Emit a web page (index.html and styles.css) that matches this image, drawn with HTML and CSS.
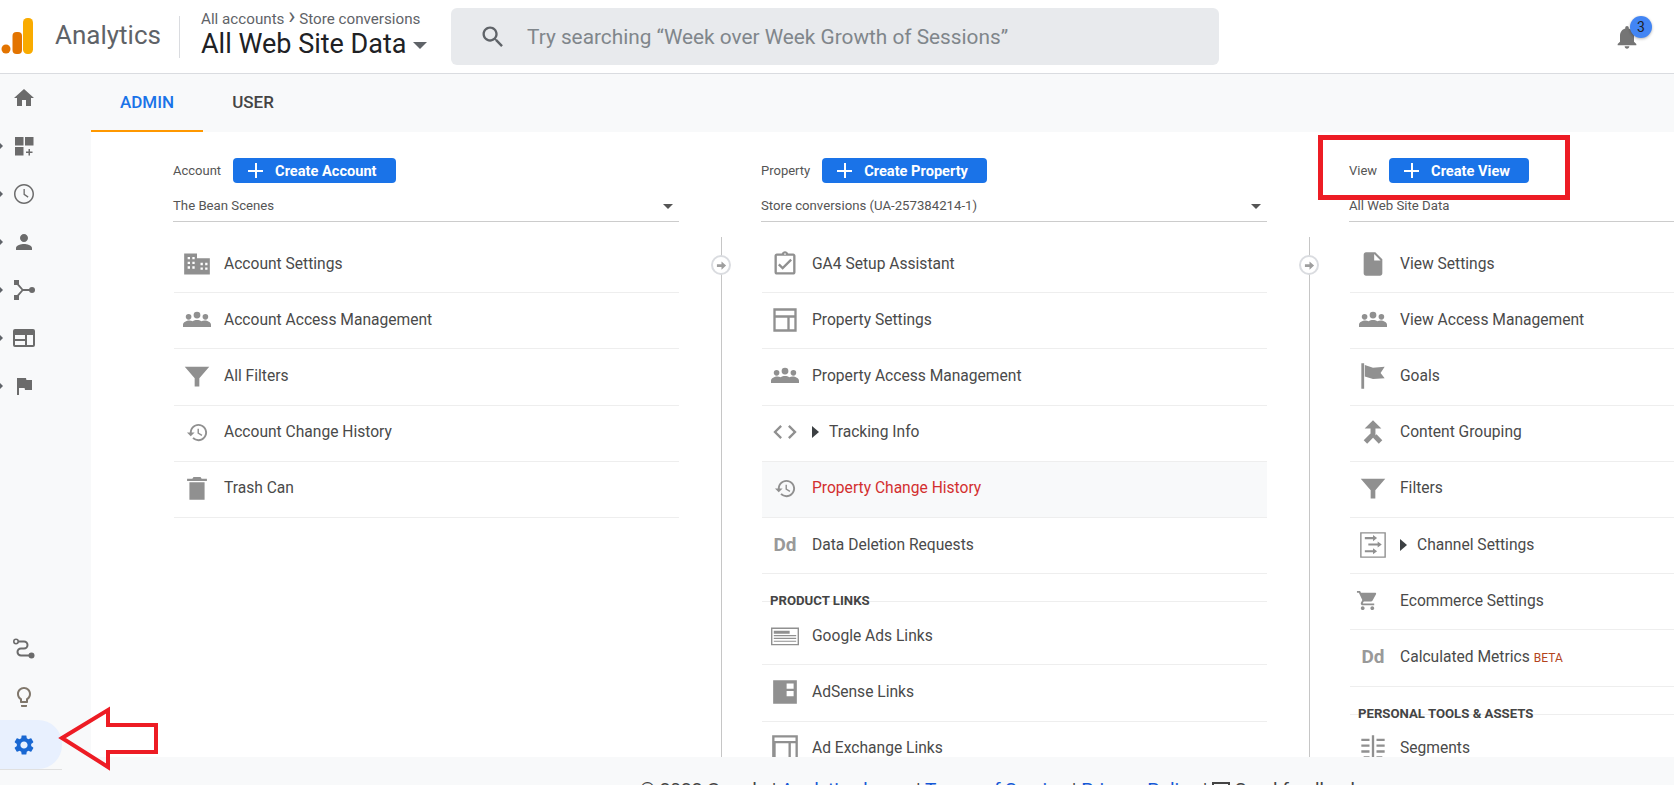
FILE: index.html
```html
<!DOCTYPE html>
<html lang="en">

<head>
    <meta charset="UTF-8">
    <meta name="viewport" content="width=device-width, initial-scale=1.0">
    <link rel="stylesheet" href="styles.css">
    <title>Analytics Admin</title>
</head>

<body>
    <svg class="sprite" xmlns="http://www.w3.org/2000/svg">
        <symbol id="i-home" viewBox="0 0 24 24"><path d="M10 20v-6h4v6h5v-8h3L12 3 2 12h3v8z"/></symbol>
        <symbol id="i-dash" viewBox="0 0 24 24"><path d="M3 3h8.500v8.500H3zM13 3h8.500v8.500H13zM3 13h8.500v8.500H3zM16.500 15h1.500v2.500h2.500V19H18v2.500h-1.500V19H14v-1.500h2.500z"/></symbol>
        <symbol id="i-clock" viewBox="0 0 24 24"><path d="M11.990 2C6.470 2 2 6.480 2 12s4.470 10 9.990 10C17.520 22 22 17.520 22 12S17.520 2 11.990 2zM12 20.500c-4.700 0-8.500-3.800-8.500-8.500S7.300 3.500 12 3.500s8.500 3.800 8.500 8.500-3.800 8.500-8.500 8.500zM11.500 7h1.300v5l3.700 2.600-.7 1.100-4.300-3z"/></symbol>
        <symbol id="i-person" viewBox="0 0 24 24"><path d="M12 12c2.210 0 4-1.790 4-4s-1.790-4-4-4-4 1.790-4 4 1.790 4 4 4zm0 2c-2.670 0-8 1.340-8 4v2h16v-2c0-2.660-5.330-4-8-4z"/></symbol>
        <symbol id="i-branch" viewBox="0 0 24 24"><path d="M2 2h5v5H2zM2 17h5v5H2z"/><circle cx="20" cy="12" r="3"/><path d="M5.500 4.500l5.500 6.500h7v2h-7l-5.500 6.500-1.500-1.300L9.600 12 4 5.800z"/></symbol>
        <symbol id="i-window" viewBox="0 0 24 24"><path d="M3 3h18a2 2 0 0 1 2 2v14a2 2 0 0 1-2 2H3a2 2 0 0 1-2-2V5a2 2 0 0 1 2-2zm0 6v10h10v-4H3v-2h10V9zm12 0v10h6V9z"/></symbol>
        <symbol id="i-flag" viewBox="0 0 24 24"><path d="M14.400 6L14 4H5v17h2v-7h5.600l.4 2h7V6z"/></symbol>
        <symbol id="i-route" viewBox="0 -2 24 24"><path d="M5 3.500h7a3.500 3.500 0 0 1 0 7H9a3.500 3.500 0 0 0 0 7h9" fill="none" stroke="currentColor" stroke-width="2"/><circle cx="4" cy="3.500" r="2.200" fill="#f8f9fa" stroke="currentColor" stroke-width="1.600"/><circle cx="19.500" cy="17.500" r="3"/></symbol>
        <symbol id="i-bulb" viewBox="0 -1 24 24"><path d="M9 21c0 .55.45 1 1 1h4c.55 0 1-.45 1-1v-1H9v1zm3-19C8.140 2 5 5.140 5 9c0 2.380 1.190 4.470 3 5.740V17c0 .55.45 1 1 1h6c.55 0 1-.45 1-1v-2.260c1.810-1.270 3-3.360 3-5.740 0-3.860-3.140-7-7-7zm2.850 11.100l-.85.6V16h-4v-2.300l-.85-.6C7.800 12.160 7 10.630 7 9c0-2.760 2.240-5 5-5s5 2.240 5 5c0 1.630-.8 3.160-2.150 4.100z"/></symbol>
        <symbol id="i-gear" viewBox="0 0 24 24"><path d="M19.140 12.940c.04-.3.06-.61.06-.94 0-.32-.02-.64-.07-.94l2.030-1.580c.18-.14.23-.41.12-.61l-1.920-3.320c-.12-.22-.37-.29-.59-.22l-2.390.96c-.5-.38-1.030-.7-1.620-.94l-.36-2.540c-.04-.24-.24-.41-.48-.41h-3.840c-.24 0-.43.17-.47.41l-.36 2.540c-.59.24-1.130.57-1.620.94l-2.390-.96c-.22-.08-.47 0-.59.22L2.740 8.870c-.12.21-.08.47.12.61l2.030 1.580c-.05.3-.09.63-.09.94s.02.64.07.94l-2.030 1.580c-.18.14-.23.41-.12.61l1.920 3.320c.12.22.37.29.59.22l2.390-.96c.5.38 1.030.7 1.620.94l.36 2.540c.05.24.24.41.48.41h3.840c.24 0 .44-.17.47-.41l.36-2.540c.59-.24 1.130-.56 1.620-.94l2.390.96c.22.08.47 0 .59-.22l1.920-3.320c.12-.22.07-.47-.12-.61l-2.010-1.580zM12 15.600c-1.980 0-3.600-1.620-3.600-3.600s1.620-3.600 3.600-3.600 3.600 1.620 3.600 3.600-1.620 3.600-3.600 3.600z"/></symbol>
        <symbol id="i-search" viewBox="0 0 24 24"><path d="M15.500 14h-.79l-.28-.27C15.410 12.590 16 11.110 16 9.500 16 5.910 13.090 3 9.500 3S3 5.910 3 9.500 5.910 16 9.500 16c1.610 0 3.090-.59 4.230-1.570l.27.28v.79l5 4.990L20.490 19l-4.990-5zm-6 0C7.010 14 5 11.990 5 9.500S7.010 5 9.500 5 14 7.010 14 9.500 11.990 14 9.500 14z"/></symbol>
        <symbol id="i-bell" viewBox="0 0 24 24"><path d="M12 22c1.100 0 2-.9 2-2h-4c0 1.100.89 2 2 2zm6-6v-5c0-3.070-1.640-5.640-4.500-6.320V4c0-.83-.67-1.500-1.500-1.500s-1.500.67-1.500 1.500v.68C7.630 5.360 6 7.920 6 11v5l-2 2v1h16v-1l-2-2z"/></symbol>
        <symbol id="i-domain" viewBox="0 0 24 24"><path d="M12 7V3H1v18h22V7H12zM4 6h2v2H4zM8 6h2v2H8zM4 10h2v2H4zM8 10h2v2H8zM4 14h2v2H4zM8 14h2v2H8zM15 11h2v2h-2zM19 11h2v2h-2zM15 15h2v2h-2zM19 15h2v2h-2z" fill-rule="evenodd"/></symbol>
        <symbol id="i-groups" viewBox="0 0 24 24"><circle cx="4.800" cy="9.300" r="2.400"/><circle cx="12" cy="7.800" r="2.900"/><circle cx="19.200" cy="9.300" r="2.400"/><path d="M0 18v-2c0-2 3-3.500 5.500-3.500 1 0 2 .2 2.700.5 1-.7 2.500-1 3.800-1s2.800.3 3.800 1c.7-.3 1.700-.5 2.700-.5 2.500 0 5.500 1.500 5.500 3.500v2z"/></symbol>
        <symbol id="i-filter" viewBox="0 0 24 24"><path d="M1.500 4h21L14 14v7h-4v-7z"/></symbol>
        <symbol id="i-history" viewBox="0 0 24 24"><path d="M13 3c-4.970 0-9 4.030-9 9H1l3.890 3.890.07.14L9 12H6c0-3.870 3.130-7 7-7s7 3.130 7 7-3.130 7-7 7c-1.930 0-3.680-.79-4.940-2.060l-1.420 1.420C8.270 19.990 10.510 21 13 21c4.970 0 9-4.030 9-9s-4.030-9-9-9zm-1 5v5l4.280 2.540.72-1.210-3.500-2.080V8H12z"/></symbol>
        <symbol id="i-trash" viewBox="0 0 24 24"><path d="M5.500 22h13V7h-13zM20.500 4H16l-1-1.500H9L8 4H3.500v2h17z"/></symbol>
        <symbol id="i-check" viewBox="0 0 24 24"><path d="M19 3h-4.180C14.400 1.840 13.300 1 12 1s-2.400.84-2.820 2H5c-1.100 0-2 .9-2 2v14c0 1.100.9 2 2 2h14c1.100 0 2-.9 2-2V5c0-1.100-.9-2-2-2zm-7-.25c.41 0 .75.34.75.75s-.34.75-.75.75-.75-.34-.75-.75.34-.75.75-.75zM19 19H5V5h14v14zM10 17l-4-4 1.410-1.410L10 14.170l6.590-6.590L18 9z"/></symbol>
        <symbol id="i-layout" viewBox="0 0 24 24"><path d="M2 2h20v20H2zm2 2v4h16V4zm0 6v10h10V10zm12 0v10h4V10z" fill-rule="evenodd"/></symbol>
        <symbol id="i-code" viewBox="0 0 24 24"><path d="M9.400 16.600L4.800 12l4.600-4.600L8 6l-6 6 6 6 1.400-1.400zm5.200 0l4.600-4.600-4.600-4.600L16 6l6 6-6 6-1.400-1.400z"/></symbol>
        <symbol id="i-ads" viewBox="0 0 30 20"><path d="M0 1h30v19H0zm1.500 1.500v16h27v-16z" fill-rule="evenodd"/><path d="M3 4.500h17v3H3zM3 9h24v1.200H3zM3 12h24v1.200H3zM3 15h24v1.200H3z"/></symbol>
        <symbol id="i-adsense" viewBox="-1 -1 26 26"><path d="M1 1h22v22H1zm12.500 3v5h6.500V4zm0 7v5h6.500v-5z" fill-rule="evenodd"/></symbol>
        <symbol id="i-exchange" viewBox="0 0 24 24"><path d="M1 1h22v22H1zm2 2v3h18V3zm1 5v13h11V8zm13 0v13h4V8z" fill-rule="evenodd"/></symbol>
        <symbol id="i-file" viewBox="0 0 24 24"><path d="M6 2c-1.100 0-1.990.9-1.990 2L4 20c0 1.100.89 2 1.990 2H18c1.100 0 2-.9 2-2V8l-6-6H6zm7 7V3.500L18.500 9H13z"/></symbol>
        <symbol id="i-goal" viewBox="0 0 24 24"><path d="M2 1h2.400v22H2zM5 2.500l7 2.500 10-1-3.500 5.500L22 14l-10 .5-7-2z"/></symbol>
        <symbol id="i-merge" viewBox="0 0 24 24"><path d="M17 20.410L18.410 19 15 15.590 13.590 17 17 20.410zM7.500 8H11v5.590L5.590 19 7 20.410l6-6V8h3.500L12 3.500 7.500 8z" stroke="currentColor" stroke-width="2.200"/></symbol>
        <symbol id="i-channel" viewBox="0 0 24 24"><path d="M1 1h22v22H1zm1.200 1.200v19.600h19.600V2.200z" fill-rule="evenodd"/><path d="M5 5.200h7V3.500l3.500 2.600L12 8.700V7H5zM8 10.800h8V9l3.500 2.600-3.500 2.600v-1.700H8zM5 16.500h7v-1.700l3.500 2.600-3.500 2.600v-1.700H5z"/></symbol>
        <symbol id="i-cart" viewBox="0 0 24 24"><path d="M7 18c-1.100 0-1.990.9-1.990 2S5.900 22 7 22s2-.9 2-2-.9-2-2-2zM1 2v2h2l3.600 7.590-1.350 2.450c-.16.28-.25.61-.25.96 0 1.100.9 2 2 2h12v-2H7.420c-.14 0-.25-.11-.25-.25l.03-.12.9-1.630h7.450c.75 0 1.410-.41 1.750-1.030l3.580-6.490c.08-.14.12-.31.12-.48 0-.55-.45-1-1-1H5.210l-.94-2H1zm16 16c-1.100 0-1.990.9-1.990 2s.89 2 1.990 2 2-.9 2-2-.9-2-2-2z"/></symbol>
        <symbol id="i-segments" viewBox="0 0 24 24"><path d="M11 1h2v22h-2zM2 4h7v2H2zM2 9h7v2H2zM2 14h7v2H2zM4 19h5v2H4zM15 4h7v2h-7zM15 9h7v2h-7zM15 14h7v2h-7zM15 19h5v2h-5z"/></symbol>
        <symbol id="i-arrow" viewBox="0 0 12 12"><path d="M1 4.500h5V1.500L11 6l-5 4.500v-3H1z"/></symbol>
    </svg>

    <header class="topbar">
        <svg class="logo" width="32" height="36" viewBox="0 0 32 36">
            <circle cx="5" cy="31" r="4.500" fill="#e37400"/>
            <rect x="11.500" y="14" width="9.500" height="22" rx="4" fill="#e37400"/>
            <rect x="22" y="0" width="10" height="36" rx="4.500" fill="#f9ab00"/>
        </svg>
        <div class="product">Analytics</div>
        <div class="crumbs">
            <div class="crumb_line">All accounts <span class="crumb_sep">&#8250;</span> Store conversions</div>
            <div class="crumb_title">All Web Site Data <span class="caret_down"></span></div>
        </div>
        <div class="searchbox">
            <svg class="search_icon"><use href="#i-search"/></svg>
            <span>Try searching “Week over Week Growth of Sessions”</span>
        </div>
        <div class="bell">
            <svg class="bell_icon"><use href="#i-bell"/></svg>
            <span class="badge">3</span>
        </div>
    </header>

    <div class="page">
        <nav class="sidebar">
            <div class="side_top">
                <div class="side_item"><svg><use href="#i-home"/></svg></div>
                <div class="side_item more"><svg><use href="#i-dash"/></svg></div>
                <div class="side_item more"><svg><use href="#i-clock"/></svg></div>
                <div class="side_item more"><svg><use href="#i-person"/></svg></div>
                <div class="side_item more"><svg><use href="#i-branch"/></svg></div>
                <div class="side_item more"><svg><use href="#i-window"/></svg></div>
                <div class="side_item more"><svg><use href="#i-flag"/></svg></div>
            </div>
            <div class="side_bottom">
                <div class="side_item"><svg><use href="#i-route"/></svg></div>
                <div class="side_item bulb"><svg><use href="#i-bulb"/></svg></div>
                <div class="side_item active"><svg><use href="#i-gear"/></svg></div>
            </div>
        </nav>

        <div class="content">
            <div class="tabs">
                <div class="tab active">ADMIN</div>
                <div class="tab">USER</div>
            </div>

            <main class="admin">
                <section class="column">
                    <div class="col_head">
                        <span class="col_label">Account</span>
                        <button class="create_btn"><span class="plus"></span>Create Account</button>
                    </div>
                    <div class="picker">The Bean Scenes <span class="caret_small"></span></div>
                    <div class="rows">
                        <div class="row"><svg class="ic"><use href="#i-domain"/></svg>Account Settings</div>
                        <div class="row"><svg class="ic"><use href="#i-groups"/></svg>Account Access Management</div>
                        <div class="row"><svg class="ic"><use href="#i-filter"/></svg>All Filters</div>
                        <div class="row"><svg class="ic ic_small"><use href="#i-history"/></svg>Account Change History</div>
                        <div class="row"><svg class="ic"><use href="#i-trash"/></svg>Trash Can</div>
                    </div>
                </section>

                <section class="column">
                    <div class="col_head">
                        <span class="col_label">Property</span>
                        <button class="create_btn"><span class="plus"></span>Create Property</button>
                    </div>
                    <div class="picker">Store conversions (UA-257384214-1) <span class="caret_small"></span></div>
                    <div class="rows linked">
                        <span class="link_dot"><svg><use href="#i-arrow"/></svg></span>
                        <div class="row"><svg class="ic"><use href="#i-check"/></svg>GA4 Setup Assistant</div>
                        <div class="row"><svg class="ic"><use href="#i-layout"/></svg>Property Settings</div>
                        <div class="row"><svg class="ic"><use href="#i-groups"/></svg>Property Access Management</div>
                        <div class="row"><svg class="ic"><use href="#i-code"/></svg><span class="caret_right"></span>Tracking Info</div>
                        <div class="row current"><svg class="ic ic_small"><use href="#i-history"/></svg>Property Change History</div>
                        <div class="row"><span class="ic dd">Dd</span>Data Deletion Requests</div>
                        <div class="group_title"><span>PRODUCT LINKS</span></div>
                        <div class="row"><svg class="ic"><use href="#i-ads"/></svg>Google Ads Links</div>
                        <div class="row"><svg class="ic"><use href="#i-adsense"/></svg>AdSense Links</div>
                        <div class="row"><svg class="ic"><use href="#i-exchange"/></svg>Ad Exchange Links</div>
                    </div>
                </section>

                <section class="column">
                    <div class="col_head">
                        <span class="col_label">View</span>
                        <button class="create_btn"><span class="plus"></span>Create View</button>
                    </div>
                    <div class="picker">All Web Site Data <span class="caret_small"></span></div>
                    <div class="rows linked">
                        <span class="link_dot"><svg><use href="#i-arrow"/></svg></span>
                        <div class="row"><svg class="ic"><use href="#i-file"/></svg>View Settings</div>
                        <div class="row"><svg class="ic"><use href="#i-groups"/></svg>View Access Management</div>
                        <div class="row"><svg class="ic"><use href="#i-goal"/></svg>Goals</div>
                        <div class="row"><svg class="ic"><use href="#i-merge"/></svg>Content Grouping</div>
                        <div class="row"><svg class="ic"><use href="#i-filter"/></svg>Filters</div>
                        <div class="row"><svg class="ic"><use href="#i-channel"/></svg><span class="caret_right"></span>Channel Settings</div>
                        <div class="row"><svg class="ic ic_small cart"><use href="#i-cart"/></svg>Ecommerce Settings</div>
                        <div class="row"><span class="ic dd">Dd</span>Calculated Metrics <span class="beta">BETA</span></div>
                        <div class="group_title"><span>PERSONAL TOOLS &amp; ASSETS</span></div>
                        <div class="row"><svg class="ic"><use href="#i-segments"/></svg>Segments</div>
                    </div>
                </section>
            </main>

            <footer class="foot">
                © 2022 Google | <a>Analytics home</a> | <a>Terms of Service</a> | <a>Privacy Policy</a> | <span class="fb_icon"></span> Send feedback
            </footer>
        </div>
    </div>

    <!-- annotations drawn on top of the screenshot -->
    <div class="mark_box"></div>
    <svg class="mark_arrow" width="110" height="70" viewBox="0 0 110 70">
        <path d="M7 32 L53 4 L53 19 L101 19 L101 46 L53 46 L53 61 Z" fill="none" stroke="#ed1c24" stroke-width="4"/>
    </svg>
</body>

</html>
```

FILE: styles.css
```css
* {
    box-sizing: border-box;
}

html,
body {
    margin: 0;
    height: 100%;
    overflow: hidden;
    background-color: #fff;
    font-family: Roboto, "Liberation Sans", sans-serif;
    color: #444;
}

body {
    display: flex;
    flex-direction: column;
}

.sprite {
    display: none;
}

svg {
    fill: currentColor;
}

/* top bar */
.topbar {
    height: 74px;
    flex: none;
    display: flex;
    align-items: center;
    border-bottom: 1px solid #dadce0;
}

.logo {
    margin: -2px 0 0 1px;
    flex: none;
}

.product {
    margin-left: 22px;
    width: 125px;
    height: 42px;
    line-height: 38px;
    font-size: 26px;
    color: #5f6368;
    flex: none;
    border-right: 1px solid #dadce0;
}

.crumbs {
    margin: -4px 0 0 21px;
    width: 250px;
    flex: none;
}

.crumb_line {
    font-size: 15.2px;
    line-height: 18px;
    color: #5f6368;
}

.crumb_sep {
    font-size: 24px;
    line-height: 14px;
}

.crumb_title {
    font-size: 27px;
    line-height: 32px;
    color: #202124;
}

.caret_down {
    display: inline-block;
    border-left: 7px solid transparent;
    border-right: 7px solid transparent;
    border-top: 7px solid #5f6368;
    vertical-align: middle;
}

.searchbox {
    width: 768px;
    height: 57px;
    background-color: #e8eaed;
    border-radius: 6px;
    display: flex;
    align-items: center;
    padding-left: 28px;
    font-size: 20.8px;
    color: #80868b;
    flex: none;
}

.search_icon {
    width: 28px;
    height: 28px;
    margin-right: 20px;
    color: #5f6368;
}

.bell {
    margin-left: 394px;
    position: relative;
    width: 28px;
    height: 28px;
}

.bell_icon {
    width: 28px;
    height: 28px;
    color: #757575;
}

.badge {
    position: absolute;
    left: 17px;
    top: -7px;
    width: 22px;
    height: 22px;
    border-radius: 50%;
    background-color: #4285f4;
    box-shadow: 0 1px 3px rgba(0, 0, 0, .3);
    text-align: center;
    font-size: 14px;
    line-height: 22px;
    color: #202124;
}

/* page */
.page {
    flex: 1;
    display: flex;
    min-height: 0;
}

.sidebar {
    width: 91px;
    flex: none;
    background-color: #f8f9fa;
    display: flex;
    flex-direction: column;
    justify-content: space-between;
    padding: 0 0 16px;
}

.side_item {
    height: 48px;
    display: flex;
    align-items: center;
    padding-left: 12px;
    color: #6b6b6b;
    position: relative;
}

.side_item svg {
    width: 24px;
    height: 24px;
}

.side_item.more::before {
    content: "";
    position: absolute;
    left: 0;
    top: 21px;
    border-left: 3px solid #5f6368;
    border-top: 3px solid transparent;
    border-bottom: 3px solid transparent;
}

.side_item.bulb {
    color: #80776b;
}

.side_item.active {
    width: 62px;
    height: 49px;
    background-color: #e8f0fe;
    border-radius: 0 24px 24px 0;
    color: #1967d2;
}

.side_item.active::after {
    content: "";
    position: absolute;
    left: 0;
    bottom: -1px;
    width: 62px;
    height: 1px;
    background-color: #e0e0e0;
}

.content {
    flex: 1;
    min-width: 0;
    display: flex;
    flex-direction: column;
}

.tabs {
    height: 58px;
    flex: none;
    display: flex;
    background-color: #f8f9fa;
}

.tab {
    padding: 0 29px;
    font-size: 17px;
    font-weight: 500;
    line-height: 57px;
    color: #444;
}

.tab.active {
    color: #1a73e8;
    border-bottom: 2px solid #ff9800;
}

.admin {
    flex: 1;
    min-height: 0;
    overflow: hidden;
    display: grid;
    grid-template-columns: repeat(3, 588px);
    padding: 26px 0 0 82px;
}

.column {
    width: 506px;
}

.col_head {
    display: flex;
    align-items: center;
    height: 25px;
}

.col_label {
    font-size: 13px;
    margin-right: 12px;
    color: #555;
}

.create_btn {
    height: 25px;
    border: 0;
    border-radius: 4px;
    background-color: #1a73e8;
    color: #fff;
    font-family: inherit;
    font-size: 14.6px;
    font-weight: 700;
    display: flex;
    align-items: center;
    padding: 0 19px 0 15px;
}

.plus {
    width: 15px;
    height: 15px;
    margin-right: 12px;
    background: linear-gradient(#fff, #fff) center / 15px 2px no-repeat, linear-gradient(#fff, #fff) center / 2px 15px no-repeat;
}

.picker {
    height: 39px;
    margin-bottom: 15px;
    border-bottom: 1px solid #ccc;
    font-size: 13.2px;
    line-height: 46px;
    color: #555;
    position: relative;
}

.caret_small {
    position: absolute;
    right: 6px;
    top: 21px;
    border-left: 5px solid transparent;
    border-right: 5px solid transparent;
    border-top: 5px solid #555;
}

.rows {
    position: relative;
    margin-left: 1px;
}

.rows.linked::before {
    content: "";
    position: absolute;
    left: -41px;
    top: 0;
    height: 600px;
    width: 1px;
    background-color: #c6c6c6;
}

.link_dot {
    position: absolute;
    left: -51px;
    top: 18px;
    width: 20px;
    height: 20px;
    border: 2px solid #dadce0;
    border-radius: 50%;
    background-color: #fff;
    color: #9e9e9e;
    display: flex;
    align-items: center;
    justify-content: center;
}

.link_dot svg {
    width: 11px;
    height: 11px;
}

.row {
    height: 56.2px;
    padding-bottom: 2px;
    display: flex;
    align-items: center;
    border-bottom: 1px solid #eee;
    font-size: 15.6px;
    color: #4a4a4a;
}

.row.current {
    background-color: #f8f9fa;
    color: #d32f2f;
}

.ic {
    width: 28px;
    height: 28px;
    margin: 0 13px 0 9px;
    color: #909090;
    flex: none;
}

.ic_small {
    width: 23px;
    height: 23px;
    margin: 0 15px 0 12px;
}

.ic_small.cart {
    margin: 0 21px 0 6px;
}

.dd {
    display: block;
    font-size: 19px;
    font-weight: 700;
    line-height: 28px;
    text-align: center;
    color: #999;
}

.caret_right {
    border-left: 7px solid #3c4043;
    border-top: 6px solid transparent;
    border-bottom: 6px solid transparent;
    margin-right: 10px;
}

.beta {
    font-size: 12px;
    color: #b3441c;
    margin: 2px 0 0 4px;
}

.group_title {
    height: 35px;
    padding: 20px 0 0 8px;
    font-size: 13.2px;
    font-weight: 700;
    line-height: 14px;
    color: #444;
    background: linear-gradient(#eee, #eee) 0 27px / 100% 1px no-repeat;
}

.foot {
    height: 28px;
    flex: none;
    overflow: hidden;
    background-color: #f8f9fa;
    padding: 22px 0 0 549px;
    font-size: 19px;
    line-height: 22px;
    color: #444;
}

.foot a {
    color: #1558d6;
    text-decoration: underline;
}

.fb_icon {
    display: inline-block;
    width: 18px;
    height: 18px;
    border: 2px solid #444;
    vertical-align: middle;
}

.mark_box {
    position: absolute;
    left: 1318px;
    top: 135px;
    width: 252px;
    height: 65px;
    border: 5px solid #ed1c24;
}

.mark_arrow {
    position: absolute;
    left: 55px;
    top: 706px;
}
```
